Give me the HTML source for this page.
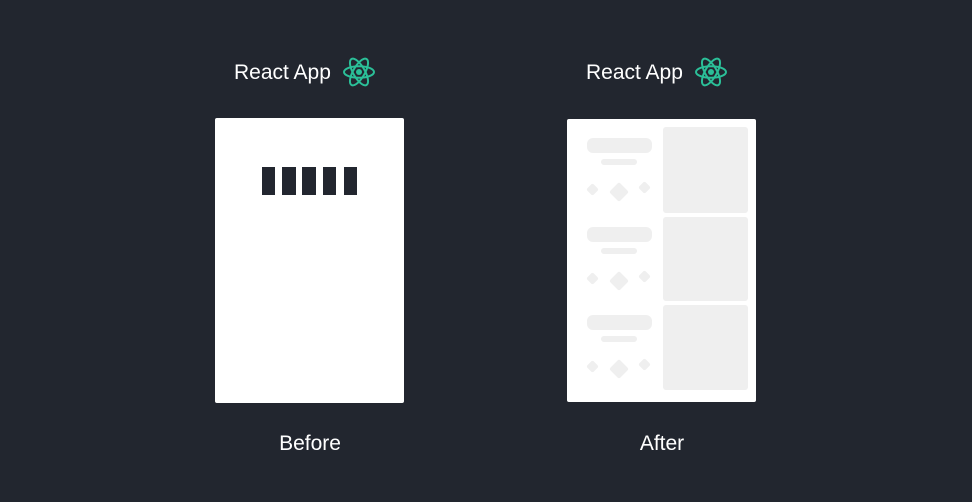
<!DOCTYPE html>
<html><head><style>
body{margin:0;width:972px;height:502px;background:#22262f;position:relative;overflow:hidden;font-family:"Liberation Sans",sans-serif;color:#fff}
.a{position:absolute}
.t{font-size:21px;white-space:nowrap}
.card{background:#fff;border-radius:2px}
.g{background:#efefef}
.d{position:absolute;background:#efefef;transform:rotate(45deg);border-radius:2px}
</style></head><body>
<div class="a t" style="left:234px;top:61px">React App</div>
<div class="a t" style="left:586px;top:61px">React App</div>
<svg class="a" style="left:343px;top:57px" width="32" height="30" viewBox="-16 -15 32 30"><g fill="none" stroke="#2bbf98" stroke-width="2"><ellipse rx="15" ry="5.8"/><ellipse rx="15" ry="5.8" transform="rotate(60)"/><ellipse rx="15" ry="5.8" transform="rotate(120)"/></g><circle r="3" fill="#2bbf98"/></svg>
<svg class="a" style="left:695px;top:57px" width="32" height="30" viewBox="-16 -15 32 30"><g fill="none" stroke="#2bbf98" stroke-width="2"><ellipse rx="15" ry="5.8"/><ellipse rx="15" ry="5.8" transform="rotate(60)"/><ellipse rx="15" ry="5.8" transform="rotate(120)"/></g><circle r="3" fill="#2bbf98"/></svg>

<div class="a card" style="left:215px;top:118px;width:189px;height:285px"></div>
<div class="a" style="left:262px;top:167px;width:13px;height:28px;background:#22262f"></div>
<div class="a" style="left:282px;top:167px;width:14px;height:28px;background:#22262f"></div>
<div class="a" style="left:302px;top:167px;width:14px;height:28px;background:#22262f"></div>
<div class="a" style="left:323px;top:167px;width:13px;height:28px;background:#22262f"></div>
<div class="a" style="left:344px;top:167px;width:13px;height:28px;background:#22262f"></div>

<div class="a card" style="left:567px;top:119px;width:189px;height:283px"></div>
<div class="a g" style="left:663px;top:127px;width:85px;height:86px;border-radius:3px"></div>
<div class="a g" style="left:663px;top:217px;width:85px;height:84px;border-radius:3px"></div>
<div class="a g" style="left:663px;top:305px;width:85px;height:85px;border-radius:3px"></div>

<div class="a" style="left:0;top:0">
<div class="a g" style="left:587px;top:138px;width:65px;height:15px;border-radius:6px"></div>
<div class="a g" style="left:601px;top:159px;width:36px;height:6px;border-radius:3px"></div>
<div class="d" style="left:588px;top:185px;width:9px;height:9px"></div>
<div class="d" style="left:612px;top:185px;width:14px;height:14px"></div>
<div class="d" style="left:640px;top:183px;width:9px;height:9px"></div>
</div>
<div class="a" style="left:0;top:89px">
<div class="a g" style="left:587px;top:138px;width:65px;height:15px;border-radius:6px"></div>
<div class="a g" style="left:601px;top:159px;width:36px;height:6px;border-radius:3px"></div>
<div class="d" style="left:588px;top:185px;width:9px;height:9px"></div>
<div class="d" style="left:612px;top:185px;width:14px;height:14px"></div>
<div class="d" style="left:640px;top:183px;width:9px;height:9px"></div>
</div>
<div class="a" style="left:0;top:177px">
<div class="a g" style="left:587px;top:138px;width:65px;height:15px;border-radius:6px"></div>
<div class="a g" style="left:601px;top:159px;width:36px;height:6px;border-radius:3px"></div>
<div class="d" style="left:588px;top:185px;width:9px;height:9px"></div>
<div class="d" style="left:612px;top:185px;width:14px;height:14px"></div>
<div class="d" style="left:640px;top:183px;width:9px;height:9px"></div>
</div>

<div class="a t" style="left:210px;width:200px;text-align:center;top:432px">Before</div>
<div class="a t" style="left:562px;width:200px;text-align:center;top:432px">After</div>
</body></html>
